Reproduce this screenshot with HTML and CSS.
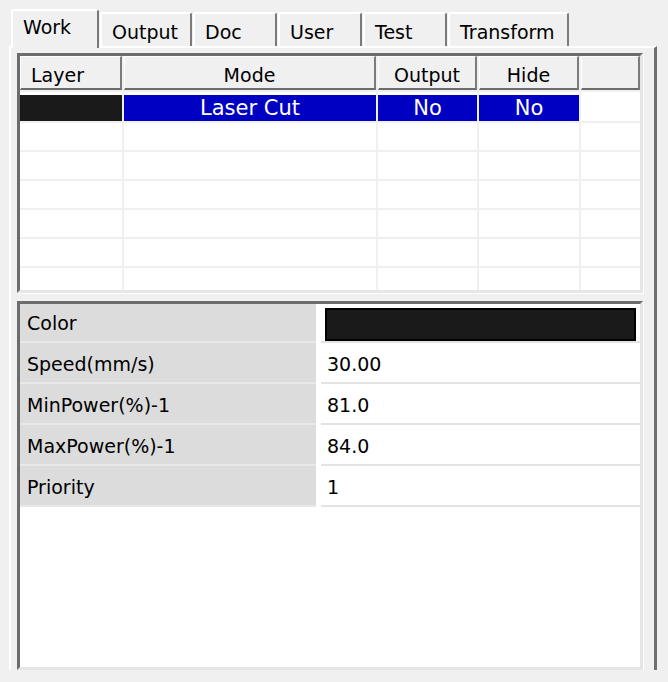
FILE: index.html
```html
<!DOCTYPE html>
<html lang="en">
<head>
    <meta charset="UTF-8">
    <title>Layer parameters</title>
    <link rel="stylesheet" href="styles.css">
</head>
<body>
    <div class="tabs">
        <div class="tab active">Work</div>
        <div class="tab">Output</div>
        <div class="tab">Doc</div>
        <div class="tab">User</div>
        <div class="tab">Test</div>
        <div class="tab">Transform</div>
    </div>

    <div class="panel">
        <!-- layer list -->
        <div class="frame layers">
            <div class="layer-grid">
                <div class="hd hd-left">Layer</div>
                <div class="hd">Mode</div>
                <div class="hd">Output</div>
                <div class="hd">Hide</div>
                <div class="hd"></div>

                <div class="cell"><div class="fill black"></div></div>
                <div class="cell"><div class="fill blue">Laser Cut</div></div>
                <div class="cell"><div class="fill blue">No</div></div>
                <div class="cell"><div class="fill blue">No</div></div>
                <div class="cell"></div>

                <div class="cell"></div><div class="cell"></div><div class="cell"></div><div class="cell"></div><div class="cell"></div>
                <div class="cell"></div><div class="cell"></div><div class="cell"></div><div class="cell"></div><div class="cell"></div>
                <div class="cell"></div><div class="cell"></div><div class="cell"></div><div class="cell"></div><div class="cell"></div>
                <div class="cell"></div><div class="cell"></div><div class="cell"></div><div class="cell"></div><div class="cell"></div>
                <div class="cell"></div><div class="cell"></div><div class="cell"></div><div class="cell"></div><div class="cell"></div>
                <div class="cell"></div><div class="cell"></div><div class="cell"></div><div class="cell"></div><div class="cell"></div>
            </div>
        </div>

        <!-- properties of the selected layer -->
        <div class="frame props">
            <div class="prop-grid">
                <div class="label label-first">Color</div>
                <div class="value value-color"><div class="color-box"></div></div>

                <div class="label">Speed(mm/s)</div>
                <div class="value">30.00</div>

                <div class="label">MinPower(%)-1</div>
                <div class="value">81.0</div>

                <div class="label">MaxPower(%)-1</div>
                <div class="value">84.0</div>

                <div class="label">Priority</div>
                <div class="value">1</div>
            </div>
        </div>
    </div>
</body>
</html>
```

FILE: styles.css
```css
* {
    box-sizing: border-box;
}
body {
    margin: 0;
    background-color: #f0f0f0;
    font-family: 'DejaVu Sans', sans-serif;
    font-size: 19px;
    color: #000;
    overflow: hidden;
}

/* tab strip */
.tabs {
    display: flex;
    align-items: flex-end;
    height: 46px;
    padding-left: 11px;
}
.tab {
    height: 34px;
    min-width: 84px;
    margin-right: 1px;
    padding: 7px 12px 0 10px;
    line-height: 22px;
    background-color: #f0f0f0;
    border: 2px solid;
    border-bottom: none;
    border-color: #fff #7a7a7a transparent #fff;
    border-radius: 2px 3px 0 0;
}
.tab.active {
    position: relative;
    z-index: 1;
    min-width: 88px;
    height: 39px;
    margin-bottom: -2px;
    padding-top: 5px;
}

/* page of the selected tab */
.panel {
    width: 648px;
    margin-left: 9px;
    padding: 5px 11px 0 6px;
    border-top: 2px solid #fff;
    border-left: 2px solid #fff;
    border-right: 3px solid #6f6f6f;
}

/* sunken frames */
.frame {
    border: 3px solid;
    border-color: #6c6c6c #e6e6e6 #e6e6e6 #6c6c6c;
    box-shadow: 1px 1px 0 #fff;
    background-color: #fff;
    overflow: hidden;
}
.layers {
    height: 240px;
}
.props {
    height: 369px;
    margin-top: 8px;
}

/* layer list */
.layer-grid {
    display: grid;
    grid-template-columns: 102px 252px 99px 100px 1fr;
    grid-template-rows: 34px 29px;
    grid-auto-rows: 27px;
    gap: 2px;
    height: 100%;
    background-color: #f0f0f0;
}
.hd {
    padding-top: 7px;
    line-height: 22px;
    text-align: center;
    background-color: #f0f0f0;
    border-top: 1px solid #fff;
    border-left: 1px solid #fff;
    border-right: 2px solid #7c7c7c;
    border-bottom: 2px solid #6c6c6c;
}
.hd-left {
    text-align: left;
    padding-left: 10px;
}
.cell {
    background-color: #fff;
    padding-top: 3px;
}
.fill {
    height: 100%;
    font-size: 21px;
    line-height: 26px;
    text-align: center;
    color: #fff;
}
.black {
    background-color: #1a1a1a;
}
.blue {
    background-color: #0000c2;
}

/* property list */
.prop-grid {
    display: grid;
    grid-template-columns: 296px 1fr;
    grid-template-rows: 39px;
    grid-auto-rows: 41px;
    column-gap: 5px;
}
.label {
    padding: 3px 0 0 7px;
    display: flex;
    align-items: center;
    background-color: #dcdcdc;
    border-bottom: 2px solid #e8e8e8;
}
.label-first {
    padding-top: 0;
}
.value {
    padding: 3px 0 0 6px;
    display: flex;
    align-items: center;
    border-bottom: 2px solid #e3e3e3;
}
.value-color {
    padding: 4px 4px 0 4px;
    align-items: stretch;
}
.color-box {
    flex: 1;
    background-color: #1a1a1a;
    border: 2px solid #000;
}
```
